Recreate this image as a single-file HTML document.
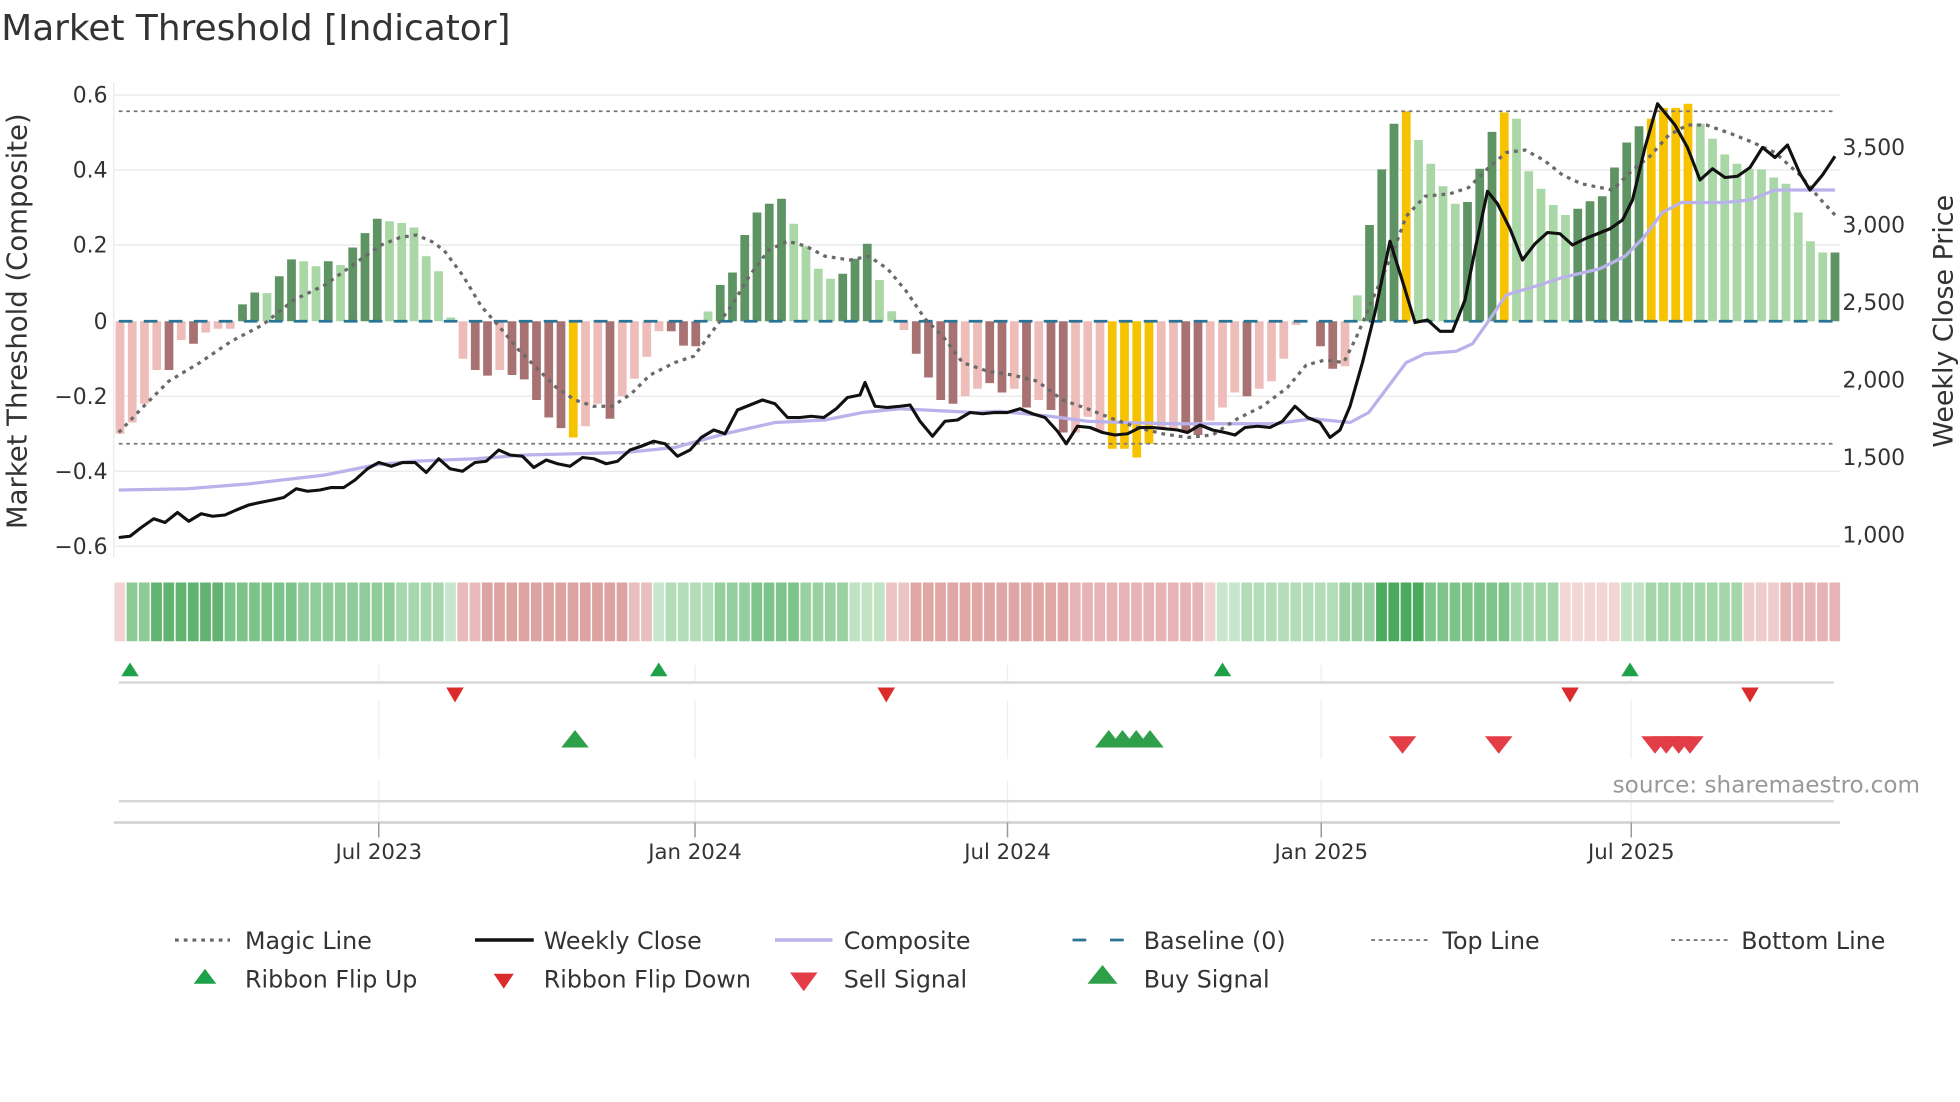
<!DOCTYPE html>
<html><head><meta charset="utf-8"><style>
html,body{margin:0;padding:0;background:#fff;}
svg{display:block;}
text{font-family:"DejaVu Sans","Liberation Sans",sans-serif;fill:#333;}
</style></head><body>
<svg width="1960" height="1102" viewBox="0 0 1568 881.6" preserveAspectRatio="none" xmlns="http://www.w3.org/2000/svg">
<rect width="1568" height="882" fill="#fff"/>
<text x="1" y="32" font-size="28.7">Market Threshold [Indicator]</text>
<!-- grid -->
<g stroke="#ececec" stroke-width="1.2">
<line x1="91" x2="1472" y1="76" y2="76"/><line x1="91" x2="1472" y1="136" y2="136"/><line x1="91" x2="1472" y1="196" y2="196"/><line x1="91" x2="1472" y1="317" y2="317"/><line x1="91" x2="1472" y1="377" y2="377"/><line x1="91" x2="1472" y1="437" y2="437"/>
<line x1="91" x2="91" y1="66" y2="446"/>
</g>
<g font-size="17.5" text-anchor="end">
<text x="86" y="82">0.6</text><text x="86" y="142">0.4</text><text x="86" y="202">0.2</text><text x="86" y="263">0</text><text x="86" y="323">−0.2</text><text x="86" y="383">−0.4</text><text x="86" y="443">−0.6</text>
</g>
<g font-size="17.5">
<text x="1474" y="124">3,500</text><text x="1474" y="186">3,000</text><text x="1474" y="248">2,500</text><text x="1474" y="310">2,000</text><text x="1474" y="372">1,500</text><text x="1474" y="434">1,000</text>
</g>
<text transform="translate(21,257) rotate(-90)" font-size="22" text-anchor="middle">Market Threshold (Composite)</text>
<text transform="translate(1562,257) rotate(-90)" font-size="21.5" text-anchor="middle">Weekly Close Price</text>
<!-- bars -->
<g>
<g fill="#eebdb9"><rect x="92.5" y="257" width="7" height="90"/><rect x="102.3" y="257" width="7" height="81"/><rect x="112.1" y="257" width="7" height="66"/><rect x="121.9" y="257" width="7" height="39"/><rect x="141.5" y="257" width="7" height="15"/><rect x="161.1" y="257" width="7" height="9"/><rect x="170.9" y="257" width="7" height="6"/><rect x="180.7" y="257" width="7" height="6"/>
<rect x="366.9" y="257" width="7" height="30"/><rect x="396.3" y="257" width="7" height="39"/><rect x="464.9" y="257" width="7" height="84"/><rect x="474.7" y="257" width="7" height="66"/><rect x="494.3" y="257" width="7" height="60"/><rect x="504.1" y="257" width="7" height="46"/><rect x="513.9" y="257" width="7" height="28.5"/><rect x="523.7" y="257" width="7" height="8"/>
<rect x="719.7" y="257" width="7" height="7"/><rect x="768.7" y="257" width="7" height="60"/><rect x="778.5" y="257" width="7" height="54"/><rect x="807.9" y="257" width="7" height="54"/><rect x="827.5" y="257" width="7" height="63"/><rect x="856.9" y="257" width="7" height="89"/><rect x="866.7" y="257" width="7" height="76.5"/><rect x="876.5" y="257" width="7" height="88"/><rect x="925.5" y="257" width="7" height="85"/><rect x="935.3" y="257" width="7" height="87"/><rect x="964.7" y="257" width="7" height="79.5"/><rect x="974.5" y="257" width="7" height="69"/><rect x="984.3" y="257" width="7" height="57"/><rect x="1003.9" y="257" width="7" height="54"/><rect x="1013.7" y="257" width="7" height="48"/><rect x="1023.5" y="257" width="7" height="30"/><rect x="1033.3" y="257" width="7" height="3"/><rect x="1072.5" y="257" width="7" height="36"/></g>
<g fill="#a87272"><rect x="131.7" y="257" width="7" height="39"/><rect x="151.3" y="257" width="7" height="18"/>
<rect x="376.7" y="257" width="7" height="39"/><rect x="386.5" y="257" width="7" height="43.5"/><rect x="406.1" y="257" width="7" height="43"/><rect x="415.9" y="257" width="7" height="46.5"/><rect x="425.7" y="257" width="7" height="63"/><rect x="435.5" y="257" width="7" height="77"/><rect x="445.3" y="257" width="7" height="85.5"/><rect x="484.5" y="257" width="7" height="78"/><rect x="533.5" y="257" width="7" height="8"/><rect x="543.3" y="257" width="7" height="19.5"/><rect x="553.1" y="257" width="7" height="20"/>
<rect x="729.5" y="257" width="7" height="26"/><rect x="739.3" y="257" width="7" height="45"/><rect x="749.1" y="257" width="7" height="63"/><rect x="758.9" y="257" width="7" height="66"/><rect x="788.3" y="257" width="7" height="49.5"/><rect x="798.1" y="257" width="7" height="57"/><rect x="817.7" y="257" width="7" height="69"/><rect x="837.3" y="257" width="7" height="71"/><rect x="847.1" y="257" width="7" height="89"/><rect x="945.1" y="257" width="7" height="88"/><rect x="954.9" y="257" width="7" height="91"/><rect x="994.1" y="257" width="7" height="60"/><rect x="1052.9" y="257" width="7" height="20"/><rect x="1062.7" y="257" width="7" height="38"/></g>
<g fill="#f7c200"><rect x="455.1" y="257" width="7" height="93"/><rect x="886.3" y="257" width="7" height="102"/><rect x="896.1" y="257" width="7" height="102"/><rect x="905.9" y="257" width="7" height="109"/><rect x="915.7" y="257" width="7" height="98"/>
<rect x="1121.5" y="89" width="7" height="168"/><rect x="1199.9" y="90" width="7" height="167"/><rect x="1317.5" y="95" width="7" height="162"/><rect x="1327.3" y="86.3" width="7" height="170.7"/><rect x="1337.1" y="86.3" width="7" height="170.7"/><rect x="1346.9" y="83" width="7" height="174"/></g>
<g fill="#5e9463"><rect x="190.5" y="243.5" width="7" height="13.5"/><rect x="200.3" y="234" width="7" height="23"/><rect x="219.9" y="221" width="7" height="36"/><rect x="229.7" y="207.5" width="7" height="49.5"/><rect x="259.1" y="209" width="7" height="48"/><rect x="278.7" y="198" width="7" height="59"/><rect x="288.5" y="186.5" width="7" height="70.5"/><rect x="298.3" y="175" width="7" height="82"/>
<rect x="572.7" y="228" width="7" height="29"/><rect x="582.5" y="218" width="7" height="39"/><rect x="592.3" y="188" width="7" height="69"/><rect x="602.1" y="170" width="7" height="87"/><rect x="611.9" y="163" width="7" height="94"/><rect x="621.7" y="159" width="7" height="98"/><rect x="670.7" y="219" width="7" height="38"/><rect x="680.5" y="207" width="7" height="50"/><rect x="690.3" y="195" width="7" height="62"/>
<rect x="1092.1" y="180" width="7" height="77"/><rect x="1101.9" y="135.5" width="7" height="121.5"/><rect x="1111.7" y="99" width="7" height="158"/><rect x="1170.5" y="161.6" width="7" height="95.4"/><rect x="1180.3" y="135" width="7" height="122"/><rect x="1190.1" y="105.5" width="7" height="151.5"/><rect x="1258.7" y="167" width="7" height="90"/><rect x="1268.5" y="161" width="7" height="96"/><rect x="1278.3" y="157" width="7" height="100"/><rect x="1288.1" y="134" width="7" height="123"/><rect x="1297.9" y="114" width="7" height="143"/><rect x="1307.7" y="101" width="7" height="156"/><rect x="1464.5" y="202" width="7" height="55"/></g>
<g fill="#a9d7a5"><rect x="210.1" y="234.5" width="7" height="22.5"/><rect x="239.5" y="209" width="7" height="48"/><rect x="249.3" y="213" width="7" height="44"/><rect x="268.9" y="212" width="7" height="45"/><rect x="308.1" y="177" width="7" height="80"/><rect x="317.9" y="178.4" width="7" height="78.6"/><rect x="327.7" y="182" width="7" height="75"/><rect x="337.5" y="205" width="7" height="52"/><rect x="347.3" y="217" width="7" height="40"/><rect x="357.1" y="254" width="7" height="3"/>
<rect x="562.9" y="249.2" width="7" height="7.8"/><rect x="631.5" y="179" width="7" height="78"/><rect x="641.3" y="197" width="7" height="60"/><rect x="651.1" y="215" width="7" height="42"/><rect x="660.9" y="223" width="7" height="34"/><rect x="700.1" y="224" width="7" height="33"/><rect x="709.9" y="249" width="7" height="8"/>
<rect x="1082.3" y="236.3" width="7" height="20.7"/><rect x="1131.3" y="112" width="7" height="145"/><rect x="1141.1" y="131" width="7" height="126"/><rect x="1150.9" y="149" width="7" height="108"/><rect x="1160.7" y="163" width="7" height="94"/><rect x="1209.7" y="95" width="7" height="162"/><rect x="1219.5" y="137" width="7" height="120"/><rect x="1229.3" y="151" width="7" height="106"/><rect x="1239.1" y="164" width="7" height="93"/><rect x="1248.9" y="172" width="7" height="85"/>
<rect x="1356.7" y="99" width="7" height="158"/><rect x="1366.5" y="111" width="7" height="146"/><rect x="1376.3" y="123.5" width="7" height="133.5"/><rect x="1386.1" y="131" width="7" height="126"/><rect x="1395.9" y="135" width="7" height="122"/><rect x="1405.7" y="135.5" width="7" height="121.5"/><rect x="1415.5" y="142" width="7" height="115"/><rect x="1425.3" y="147" width="7" height="110"/><rect x="1435.1" y="170" width="7" height="87"/><rect x="1444.9" y="193" width="7" height="64"/><rect x="1454.7" y="202" width="7" height="55"/></g>
</g>
<line x1="95" x2="1468" y1="89" y2="89" stroke="#777" stroke-width="1.4" stroke-dasharray="3,3"/>
<line x1="95" x2="1468" y1="355" y2="355" stroke="#777" stroke-width="1.4" stroke-dasharray="3,3"/>
<line x1="95" x2="1468" y1="257" y2="257" stroke="#2a7496" stroke-width="2.2" stroke-dasharray="11,9"/>
<polyline fill="none" stroke="#bab2ea" stroke-width="2.6" points="95,392 150,391 200,387 260,380 300,372 330,369 380,367 420,364 500,362 540,358 580,347 620,338 660,336 690,330 720,327 740,328 780,330 800,329 840,333 870,337 900,338 940,339 980,339 1020,339 1050,335 1080,338 1095,330 1110,310 1125,290 1140,283 1165,281 1178,275 1190,258 1205,236 1225,230 1250,222 1280,215 1300,205 1315,190 1330,170 1345,162 1380,162 1400,160 1420,152 1440,152 1468,152"/>
<polyline fill="none" stroke="#6a6a6a" stroke-width="2.6" stroke-dasharray="3,4" points="95,346 115,325 135,305 160,290 185,273 210,260 235,240 260,228 285,210 305,196 320,190 333,188 345,193 355,200 370,220 385,245 400,262 415,280 430,295 445,310 460,320 475,325 490,325 505,315 520,300 540,290 555,285 570,265 585,245 600,220 615,200 630,193 645,197 660,205 680,208 695,205 710,215 725,233 740,255 755,270 770,290 790,297 810,300 830,305 850,320 870,327 890,335 910,342 930,347 950,350 970,348 990,335 1010,325 1030,310 1045,292 1060,288 1075,290 1085,270 1100,235 1115,200 1125,173 1140,157 1160,155 1175,150 1190,135 1205,122 1220,120 1235,128 1250,140 1265,147 1290,152 1305,137 1320,125 1335,108 1350,100 1365,100 1385,107 1400,113 1420,122 1440,140 1455,158 1468,172"/>
<polyline fill="none" stroke="#111" stroke-width="2.5" stroke-linejoin="round" points="95,430 104,429 113,422 123,415 132,418 142,410 151,417 161,411 170,413 180,412 189,408 199,404 208,402 218,400 227,398 237,391 246,393 256,392 265,390 275,390 284,384 294,375 303,370 313,373 322,370 332,370 341,378 351,367 360,375 370,377 380,370 389,369 399,360 408,364 418,365 427,374 437,368 446,371 456,373 466,366 475,367 485,371 494,369 504,360 513,357 523,353 532,355 542,365 552,360 561,350 571,344 580,347 590,328 600,324 610,320 620,323 630,334 640,334 649,333 659,334 669,327 678,318 688,316 692,306 700,325 710,326 720,325 728,324 736,337 746,349 756,337 766,336 776,330 786,331 796,330 806,330 816,327 826,331 836,334 846,345 853,355 862,341 872,342 882,346 892,348 902,347 912,342 922,342 932,343 942,344 950,346 960,340 970,344 980,346 988,348 996,342 1006,341 1016,342 1026,337 1036,325 1046,334 1056,338 1064,350 1072,344 1080,325 1090,290 1100,250 1112,193 1122,225 1132,258 1142,256 1152,265 1162,265 1172,240 1180,200 1190,153 1198,163 1208,183 1218,208 1228,195 1238,186 1248,187 1258,196 1268,191 1278,187 1288,183 1298,176 1306,160 1316,118 1326,83 1340,100 1350,118 1360,144 1370,135 1380,142 1390,141 1400,134 1410,118 1420,126 1430,116 1440,139 1448,152 1458,140 1468,125"/>
<g>
<rect x="91.5" y="466" width="8.6" height="47" fill="#f2d3d3"/>
<g fill="#8cca96"><rect x="101.3" y="466" width="8.6" height="47"/><rect x="111.1" y="466" width="8.6" height="47"/></g>
<g fill="#62b371"><rect x="120.9" y="466" width="8.6" height="47"/><rect x="130.7" y="466" width="8.6" height="47"/><rect x="140.5" y="466" width="8.6" height="47"/><rect x="150.3" y="466" width="8.6" height="47"/><rect x="160.1" y="466" width="8.6" height="47"/><rect x="169.9" y="466" width="8.6" height="47"/></g>
<g fill="#7bc388"><rect x="179.7" y="466" width="8.6" height="47"/><rect x="189.5" y="466" width="8.6" height="47"/><rect x="199.3" y="466" width="8.6" height="47"/><rect x="209.1" y="466" width="8.6" height="47"/><rect x="218.9" y="466" width="8.6" height="47"/><rect x="228.7" y="466" width="8.6" height="47"/></g>
<g fill="#8fcc99"><rect x="238.5" y="466" width="8.6" height="47"/><rect x="248.3" y="466" width="8.6" height="47"/><rect x="258.1" y="466" width="8.6" height="47"/><rect x="267.9" y="466" width="8.6" height="47"/><rect x="277.7" y="466" width="8.6" height="47"/><rect x="287.5" y="466" width="8.6" height="47"/><rect x="297.3" y="466" width="8.6" height="47"/><rect x="307.1" y="466" width="8.6" height="47"/></g>
<g fill="#a7d8ad"><rect x="316.9" y="466" width="8.6" height="47"/><rect x="326.7" y="466" width="8.6" height="47"/><rect x="336.5" y="466" width="8.6" height="47"/><rect x="346.3" y="466" width="8.6" height="47"/></g>
<rect x="356.1" y="466" width="8.6" height="47" fill="#c8e6cc"/>
<g fill="#e8baba"><rect x="365.9" y="466" width="8.6" height="47"/><rect x="375.7" y="466" width="8.6" height="47"/></g>
<g fill="#dda2a2"><rect x="385.5" y="466" width="8.6" height="47"/><rect x="395.3" y="466" width="8.6" height="47"/><rect x="405.1" y="466" width="8.6" height="47"/><rect x="414.9" y="466" width="8.6" height="47"/><rect x="424.7" y="466" width="8.6" height="47"/><rect x="434.5" y="466" width="8.6" height="47"/><rect x="444.3" y="466" width="8.6" height="47"/><rect x="454.1" y="466" width="8.6" height="47"/><rect x="463.9" y="466" width="8.6" height="47"/><rect x="473.7" y="466" width="8.6" height="47"/><rect x="483.5" y="466" width="8.6" height="47"/><rect x="493.3" y="466" width="8.6" height="47"/></g>
<g fill="#e9bebe"><rect x="503.1" y="466" width="8.6" height="47"/><rect x="512.9" y="466" width="8.6" height="47"/></g>
<rect x="522.7" y="466" width="8.6" height="47" fill="#c8e6cc"/>
<g fill="#b3ddb8"><rect x="532.5" y="466" width="8.6" height="47"/><rect x="542.3" y="466" width="8.6" height="47"/><rect x="552.1" y="466" width="8.6" height="47"/><rect x="561.9" y="466" width="8.6" height="47"/></g>
<g fill="#94cf9e"><rect x="571.7" y="466" width="8.6" height="47"/><rect x="581.5" y="466" width="8.6" height="47"/><rect x="591.3" y="466" width="8.6" height="47"/></g>
<g fill="#7cc489"><rect x="601.1" y="466" width="8.6" height="47"/><rect x="610.9" y="466" width="8.6" height="47"/><rect x="620.7" y="466" width="8.6" height="47"/><rect x="630.5" y="466" width="8.6" height="47"/></g>
<g fill="#9ad1a3"><rect x="640.3" y="466" width="8.6" height="47"/><rect x="650.1" y="466" width="8.6" height="47"/><rect x="659.9" y="466" width="8.6" height="47"/><rect x="669.7" y="466" width="8.6" height="47"/></g>
<g fill="#bfe3c3"><rect x="679.5" y="466" width="8.6" height="47"/><rect x="689.3" y="466" width="8.6" height="47"/><rect x="699.1" y="466" width="8.6" height="47"/></g>
<g fill="#ecc4c4"><rect x="708.9" y="466" width="8.6" height="47"/><rect x="718.7" y="466" width="8.6" height="47"/></g>
<g fill="#dfa6a6"><rect x="728.5" y="466" width="8.6" height="47"/><rect x="738.3" y="466" width="8.6" height="47"/><rect x="748.1" y="466" width="8.6" height="47"/><rect x="757.9" y="466" width="8.6" height="47"/><rect x="767.7" y="466" width="8.6" height="47"/><rect x="777.5" y="466" width="8.6" height="47"/><rect x="787.3" y="466" width="8.6" height="47"/><rect x="797.1" y="466" width="8.6" height="47"/><rect x="806.9" y="466" width="8.6" height="47"/><rect x="816.7" y="466" width="8.6" height="47"/><rect x="826.5" y="466" width="8.6" height="47"/><rect x="836.3" y="466" width="8.6" height="47"/><rect x="846.1" y="466" width="8.6" height="47"/></g>
<g fill="#e6b4b4"><rect x="855.9" y="466" width="8.6" height="47"/><rect x="865.7" y="466" width="8.6" height="47"/><rect x="875.5" y="466" width="8.6" height="47"/><rect x="885.3" y="466" width="8.6" height="47"/><rect x="895.1" y="466" width="8.6" height="47"/><rect x="904.9" y="466" width="8.6" height="47"/><rect x="914.7" y="466" width="8.6" height="47"/><rect x="924.5" y="466" width="8.6" height="47"/><rect x="934.3" y="466" width="8.6" height="47"/><rect x="944.1" y="466" width="8.6" height="47"/><rect x="953.9" y="466" width="8.6" height="47"/></g>
<rect x="963.7" y="466" width="8.6" height="47" fill="#f0d2d2"/>
<g fill="#c8e6cc"><rect x="973.5" y="466" width="8.6" height="47"/><rect x="983.3" y="466" width="8.6" height="47"/></g>
<g fill="#b3ddb8"><rect x="993.1" y="466" width="8.6" height="47"/><rect x="1002.9" y="466" width="8.6" height="47"/><rect x="1012.7" y="466" width="8.6" height="47"/><rect x="1022.5" y="466" width="8.6" height="47"/><rect x="1032.3" y="466" width="8.6" height="47"/><rect x="1042.1" y="466" width="8.6" height="47"/><rect x="1051.9" y="466" width="8.6" height="47"/><rect x="1061.7" y="466" width="8.6" height="47"/></g>
<g fill="#9ad1a3"><rect x="1071.5" y="466" width="8.6" height="47"/><rect x="1081.3" y="466" width="8.6" height="47"/><rect x="1091.1" y="466" width="8.6" height="47"/></g>
<g fill="#4aaa5d"><rect x="1100.9" y="466" width="8.6" height="47"/><rect x="1110.7" y="466" width="8.6" height="47"/><rect x="1120.5" y="466" width="8.6" height="47"/><rect x="1130.3" y="466" width="8.6" height="47"/></g>
<g fill="#7cc489"><rect x="1140.1" y="466" width="8.6" height="47"/><rect x="1149.9" y="466" width="8.6" height="47"/><rect x="1159.7" y="466" width="8.6" height="47"/><rect x="1169.5" y="466" width="8.6" height="47"/><rect x="1179.3" y="466" width="8.6" height="47"/><rect x="1189.1" y="466" width="8.6" height="47"/><rect x="1198.9" y="466" width="8.6" height="47"/></g>
<g fill="#a3d6a9"><rect x="1208.7" y="466" width="8.6" height="47"/><rect x="1218.5" y="466" width="8.6" height="47"/><rect x="1228.3" y="466" width="8.6" height="47"/><rect x="1238.1" y="466" width="8.6" height="47"/></g>
<g fill="#f2d6d6"><rect x="1247.9" y="466" width="8.6" height="47"/><rect x="1257.7" y="466" width="8.6" height="47"/><rect x="1267.5" y="466" width="8.6" height="47"/><rect x="1277.3" y="466" width="8.6" height="47"/><rect x="1287.1" y="466" width="8.6" height="47"/></g>
<g fill="#c0e3c4"><rect x="1296.9" y="466" width="8.6" height="47"/><rect x="1306.7" y="466" width="8.6" height="47"/></g>
<g fill="#a3d6a9"><rect x="1316.5" y="466" width="8.6" height="47"/><rect x="1326.3" y="466" width="8.6" height="47"/><rect x="1336.1" y="466" width="8.6" height="47"/><rect x="1345.9" y="466" width="8.6" height="47"/><rect x="1355.7" y="466" width="8.6" height="47"/><rect x="1365.5" y="466" width="8.6" height="47"/><rect x="1375.3" y="466" width="8.6" height="47"/><rect x="1385.1" y="466" width="8.6" height="47"/></g>
<g fill="#efcccc"><rect x="1394.9" y="466" width="8.6" height="47"/><rect x="1404.7" y="466" width="8.6" height="47"/><rect x="1414.5" y="466" width="8.6" height="47"/></g>
<g fill="#e6b4b4"><rect x="1424.3" y="466" width="8.6" height="47"/><rect x="1434.1" y="466" width="8.6" height="47"/><rect x="1443.9" y="466" width="8.6" height="47"/><rect x="1453.7" y="466" width="8.6" height="47"/><rect x="1463.5" y="466" width="8.6" height="47"/></g>
</g>
<g stroke="#eeeeee" stroke-width="1">
<line x1="303" x2="303" y1="532" y2="545"/><line x1="556" x2="556" y1="532" y2="545"/><line x1="806" x2="806" y1="532" y2="545"/><line x1="1057" x2="1057" y1="532" y2="545"/><line x1="1305" x2="1305" y1="532" y2="545"/>
<line x1="303" x2="303" y1="560" y2="607"/><line x1="556" x2="556" y1="560" y2="607"/><line x1="806" x2="806" y1="560" y2="607"/><line x1="1057" x2="1057" y1="560" y2="607"/><line x1="1305" x2="1305" y1="560" y2="607"/>
<line x1="303" x2="303" y1="624" y2="658"/><line x1="556" x2="556" y1="624" y2="658"/><line x1="806" x2="806" y1="624" y2="658"/><line x1="1057" x2="1057" y1="624" y2="658"/><line x1="1305" x2="1305" y1="624" y2="658"/>
</g>
<line x1="95" x2="1467" y1="546" y2="546" stroke="#d8d8d8" stroke-width="2"/>
<line x1="95" x2="1467" y1="641" y2="641" stroke="#d8d8d8" stroke-width="2"/>
<line x1="91" x2="1472" y1="658" y2="658" stroke="#d0d0d0" stroke-width="2"/>
<g stroke="#999" stroke-width="1.2"><line x1="303" x2="303" y1="658" y2="670"/><line x1="556" x2="556" y1="658" y2="670"/><line x1="806" x2="806" y1="658" y2="670"/><line x1="1057" x2="1057" y1="658" y2="670"/><line x1="1305" x2="1305" y1="658" y2="670"/></g>
<g fill="#1fa14a">
<path d="M97,541 L104,530 L111,541Z"/><path d="M520,541 L527,530 L534,541Z"/><path d="M971,541 L978,530 L985,541Z"/><path d="M1297,541 L1304,530 L1311,541Z"/>
</g>
<g fill="#dc2b2b">
<path d="M357,550 L371,550 L364,562Z"/><path d="M702,550 L716,550 L709,562Z"/><path d="M1249,550 L1263,550 L1256,562Z"/><path d="M1393,550 L1407,550 L1400,562Z"/>
</g>
<g fill="#2ea04a">
<path d="M449,598 L460,584 L471,598Z"/><path d="M876,598 L887,584 L898,598Z"/><path d="M887,598 L898,584 L909,598Z"/><path d="M898,598 L909,584 L920,598Z"/><path d="M909,598 L920,584 L931,598Z"/>
</g>
<g fill="#e33d48">
<path d="M1111,589 L1133,589 L1122,603Z"/><path d="M1188,589 L1210,589 L1199,603Z"/><path d="M1313,589 L1335,589 L1324,603Z"/><path d="M1322,589 L1344,589 L1333,603Z"/><path d="M1332,589 L1354,589 L1343,603Z"/><path d="M1341,589 L1363,589 L1352,603Z"/>
</g>
<text x="1536" y="634" font-size="18.5" text-anchor="end" style="fill:#999">source: sharemaestro.com</text>
<g font-size="17" text-anchor="middle">
<text x="303" y="687">Jul 2023</text><text x="556" y="687">Jan 2024</text><text x="806" y="687">Jul 2024</text><text x="1057" y="687">Jan 2025</text><text x="1305" y="687">Jul 2025</text>
</g>
<line x1="140" x2="184" y1="752" y2="752" stroke="#666" stroke-width="2.5" stroke-dasharray="3,4"/>
<line x1="380" x2="427" y1="752" y2="752" stroke="#111" stroke-width="2.8"/>
<line x1="620" x2="666" y1="752" y2="752" stroke="#bab2ea" stroke-width="2.8"/>
<line x1="858" x2="904" y1="752" y2="752" stroke="#2a7496" stroke-width="2.2" stroke-dasharray="11,19"/>
<line x1="1097" x2="1142" y1="752" y2="752" stroke="#777" stroke-width="1.5" stroke-dasharray="3,3"/>
<line x1="1337" x2="1382" y1="752" y2="752" stroke="#777" stroke-width="1.5" stroke-dasharray="3,3"/>
<path d="M155,787 L164,775 L173,787Z" fill="#1fa14a"/>
<path d="M395,779 L411,779 L403,791Z" fill="#dc2b2b"/>
<path d="M632,778 L654,778 L643,793Z" fill="#e33d48"/>
<path d="M870,787 L882,772 L894,787Z" fill="#2ea04a"/>
<g font-size="19">
<text x="196" y="759">Magic Line</text><text x="435" y="759">Weekly Close</text><text x="675" y="759">Composite</text><text x="915" y="759">Baseline (0)</text><text x="1154" y="759">Top Line</text><text x="1393" y="759">Bottom Line</text>
<text x="196" y="790">Ribbon Flip Up</text><text x="435" y="790">Ribbon Flip Down</text><text x="675" y="790">Sell Signal</text><text x="915" y="790">Buy Signal</text>
</g>
</svg>
</body></html>
